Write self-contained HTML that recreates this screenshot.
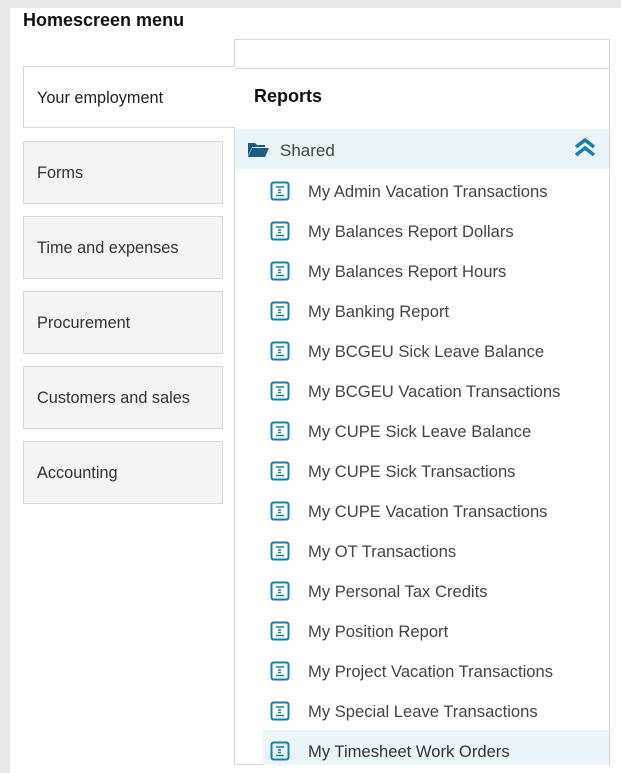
<!DOCTYPE html>
<html><head><style>
body{margin:0;width:621px;height:773px;background:#e6e7e8;font-family:"Liberation Sans",sans-serif;position:relative;overflow:hidden}
.panel{position:absolute;left:10px;top:8px;width:611px;height:765px;background:#fff}
.t{position:absolute;left:23px;top:10px;font-size:18px;font-weight:bold;color:#111}
.box{position:absolute;left:23px;background:#f3f4f4;border:1px solid #d6d8d8;font-size:16.3px;color:#333;line-height:63px;text-indent:13px;box-sizing:border-box;width:200px;height:63px}
.rp{position:absolute;left:234px;top:39px;width:376px;height:726px;border:1px solid #d6d8d8;border-right:none;box-sizing:border-box}
.rl{position:absolute;left:609px;top:39px;width:1px;height:726px;background:#d6d8d8}
.item{position:absolute;left:263px;width:346px;height:40px;font-size:16.6px;color:#444;line-height:40px}
.item span{position:absolute;left:45px}
.ic{position:absolute;left:7px;top:9px}
</style></head><body>
<div class="panel"></div>
<div class="t">Homescreen menu</div>
<div class="rp"></div>
<div class="rl"></div>
<div style="position:absolute;left:235px;top:68px;width:374px;height:1px;background:#d6d8d8"></div>
<div style="position:absolute;left:23px;top:66px;width:212px;height:62px;border:1px solid #d6d8d8;border-right:none;box-sizing:border-box;background:#fff;font-size:16.3px;color:#222;line-height:62px;text-indent:13px">Your employment</div>
<div style="position:absolute;left:254px;top:86px;font-size:18px;font-weight:bold;color:#111">Reports</div>
<div class="box" style="top:141px">Forms</div>
<div class="box" style="top:216px">Time and expenses</div>
<div class="box" style="top:291px">Procurement</div>
<div class="box" style="top:366px">Customers and sales</div>
<div class="box" style="top:441px">Accounting</div>
<div style="position:absolute;left:235px;top:129px;width:374px;height:40px;background:#eaf5fa"></div>
<svg style="position:absolute;left:248px;top:142px" width="21" height="15" viewBox="0 0 21 15"><path d="M0 1h7l2 2h8v2H4L0 14z" fill="#1a5e86"/><path d="M4 6h17l-4 9H0z" fill="#1a5e86"/></svg>
<div style="position:absolute;left:280px;top:141px;font-size:17px;color:#444">Shared</div>
<svg style="position:absolute;left:574px;top:138px" width="22" height="20" viewBox="0 0 22 20"><path d="M2 9l9-7 9 7M2 17l9-7 9 7" fill="none" stroke="#1a7fa8" stroke-width="3.5"/></svg>
<div style="position:absolute;left:263px;top:730px;width:346px;height:35px;background:#eaf5fa"></div>
<div id="list"></div>
<script>
var n=["My Admin Vacation Transactions","My Balances Report Dollars","My Balances Report Hours","My Banking Report","My BCGEU Sick Leave Balance","My BCGEU Vacation Transactions","My CUPE Sick Leave Balance","My CUPE Sick Transactions","My CUPE Vacation Transactions","My OT Transactions","My Personal Tax Credits","My Position Report","My Project Vacation Transactions","My Special Leave Transactions","My Timesheet Work Orders"];
var h="";n.forEach(function(s,i){h+='<div class="item" style="top:'+(172+i*40)+'px"><svg class="ic" width="20" height="20" viewBox="0 0 20 20"><rect x="1.5" y="1.5" width="17" height="17" rx="2" fill="none" stroke="#1a7fa8" stroke-width="2"/><path d="M6 6h8M8 9h3M8 11.5h3M6 14.5h8" stroke="#1a7fa8" stroke-width="1.4"/></svg><span'+(i==14?' style="color:#333"':'')+'>'+s+'</span></div>'});
document.getElementById("list").innerHTML=h;
</script>
</body></html>
